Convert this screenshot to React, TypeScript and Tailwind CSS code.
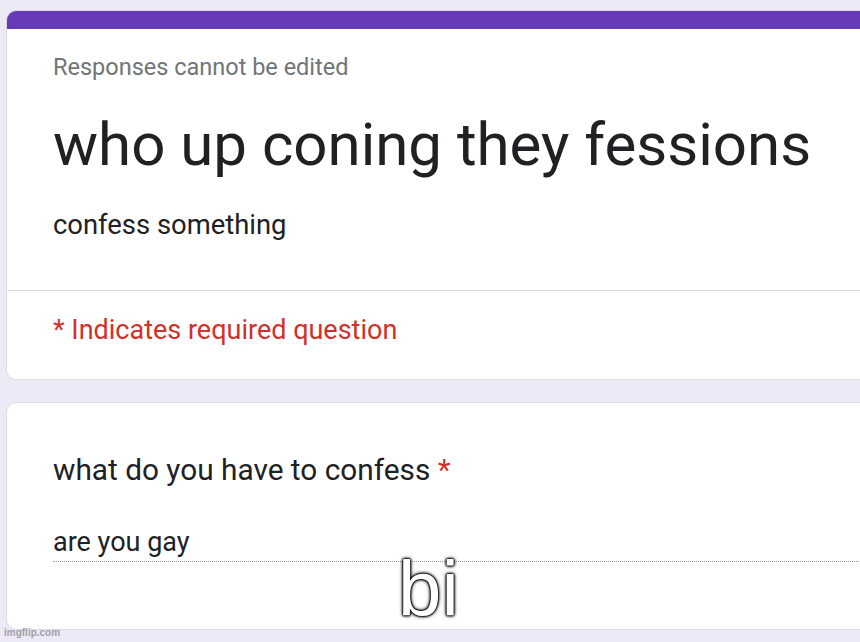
import React from "react";

export default function App() {
  return (
    <div className="relative w-[860px] h-[642px] overflow-hidden bg-[#ede9f7] pt-[10px] pl-[6px] font-['Roboto',sans-serif]">
      <div className="w-[900px] rounded-[10px] border border-[#dadce0] bg-white overflow-hidden">
        <div className="h-[19px] bg-[#673ab7] -mx-px -mt-px"></div>
        <div className="pl-[46px] pt-[22px] pb-[48px]">
          <div className="text-[23.5px] leading-[32px] text-[#70757a]">Responses cannot be edited</div>
          <div className="mt-[26px] text-[60px] leading-[72px] text-[#202124]">who up coning they fessions</div>
          <div className="mt-[27px] text-[27.4px] leading-[34px] text-[#202124]">confess something</div>
        </div>
        <div className="h-px bg-[#dadce0]"></div>
        <div className="pl-[46px] pt-[22px] pb-[32px]">
          <div className="text-[27px] leading-[34px] text-[#d0312a]">* Indicates required question</div>
        </div>
      </div>
      <div className="mt-[22px] w-[900px] h-[228px] rounded-[10px] border border-[#dadce0] bg-white">
        <div className="pl-[46px] pt-[49px]">
          <div className="text-[29.8px] leading-[36px] text-[#202124]">
            what do you have to confess <span className="text-[#d0312a]">*</span>
          </div>
          <div className="mt-[38px] border-b border-dotted border-[#9a9a9a] pb-[3px] text-[27px] leading-[32px] text-[#202124]">
            are you gay
          </div>
        </div>
      </div>
      <div className="absolute left-[4px] top-[626px] font-['Liberation_Sans',Arial,sans-serif] font-bold text-[10px] leading-[14px] text-[#a0a0a8]">
        imgflip.com
      </div>
      <div className="absolute left-[398px] top-[544px] font-['Liberation_Sans',Arial,sans-serif] text-[78px] leading-[90px] text-white [text-shadow:0_0_4px_#000,0_0_3px_#000,0_0_2px_#000,0_0_2px_#000,0_0_1px_#000,0_0_1px_#000]">
        bi
      </div>
    </div>
  );
}
